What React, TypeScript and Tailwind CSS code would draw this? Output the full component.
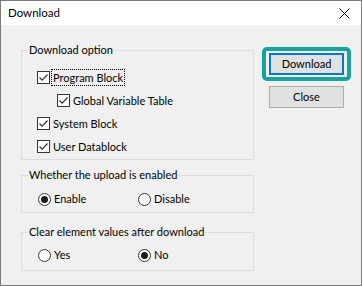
import React from "react";

function Check({ label, focus }: { label: string; focus?: boolean }) {
  return (
    <div className="flex h-[23px] items-center">
      <span className="flex h-[13px] w-[13px] items-center justify-center border border-[#333333] bg-white">
        <svg width="11" height="11" viewBox="0 0 11 11">
          <path d="M1.5 5.5 L4.2 8.2 L9.5 2.5" fill="none" stroke="#333333" strokeWidth="1.2" />
        </svg>
      </span>
      <span
        className={
          "ml-[2px] px-[1px] leading-[15px] " +
          (focus ? "outline outline-1 outline-dotted outline-black" : "")
        }
      >
        {label}
      </span>
    </div>
  );
}

function Radio({ label, checked }: { label: string; checked?: boolean }) {
  return (
    <div className="flex h-[23px] w-[100px] items-center">
      <span className="flex h-[13px] w-[13px] items-center justify-center rounded-full border border-[#333333] bg-white">
        {checked && <span className="h-[7px] w-[7px] rounded-full bg-[#1a1a1a]" />}
      </span>
      <span className="ml-[3px]">{label}</span>
    </div>
  );
}

function Group({
  title,
  className,
  children,
}: {
  title: string;
  className: string;
  children: React.ReactNode;
}) {
  return (
    <div className={"relative w-[233px] border border-[#dcdcdc] " + className}>
      <span className="absolute left-[6px] top-[-10px] bg-[#f0f0f0] px-[1px] leading-[18px]">
        {title}
      </span>
      {children}
    </div>
  );
}

export default function App() {
  return (
    <div className="flex h-[286px] w-[362px] flex-col border border-[#7a7a7a] bg-[#f0f0f0] font-['Lato',sans-serif] text-[11px] text-black">
      <div className="flex h-[24px] items-center justify-between bg-white pl-[7px] pr-[11px]">
        <span className="text-[11.5px]">Download</span>
        <svg width="11" height="11" viewBox="0 0 11 11">
          <path d="M0.5 0.5 L10.5 10.5 M10.5 0.5 L0.5 10.5" stroke="#000" strokeWidth="1" fill="none" />
        </svg>
      </div>
      <div className="flex">
        <div className="ml-[20px] mt-[25px] flex flex-col">
          <Group title="Download option" className="h-[110px] pl-[15px] pt-[15px]">
            <Check label="Program Block" focus />
            <div className="pl-[20px]">
              <Check label="Global Variable Table" />
            </div>
            <Check label="System Block" />
            <Check label="User Datablock" />
          </Group>
          <Group title="Whether the upload is enabled" className="mt-[15px] h-[38px] pl-[16px] pt-[12px]">
            <div className="flex">
              <Radio label="Enable" checked />
              <Radio label="Disable" />
            </div>
          </Group>
          <Group title="Clear element values after download" className="mt-[19px] h-[39px] pl-[16px] pt-[11px]">
            <div className="flex">
              <Radio label="Yes" />
              <Radio label="No" checked />
            </div>
          </Group>
        </div>
        <div className="ml-[8px] mt-[22px] flex flex-col">
          <div className="rounded-[5px] border-[4px] border-[#14a39f] px-[3px] py-[2px]">
            <div className="flex h-[22px] w-[75px] items-center justify-center border-2 border-[#0078d7] bg-[#e1e1e1]">
              Download
            </div>
          </div>
          <div className="ml-[7px] mt-[5px] flex h-[22px] w-[75px] items-center justify-center border border-[#adadad] bg-[#e1e1e1]">
            Close
          </div>
        </div>
      </div>
    </div>
  );
}
